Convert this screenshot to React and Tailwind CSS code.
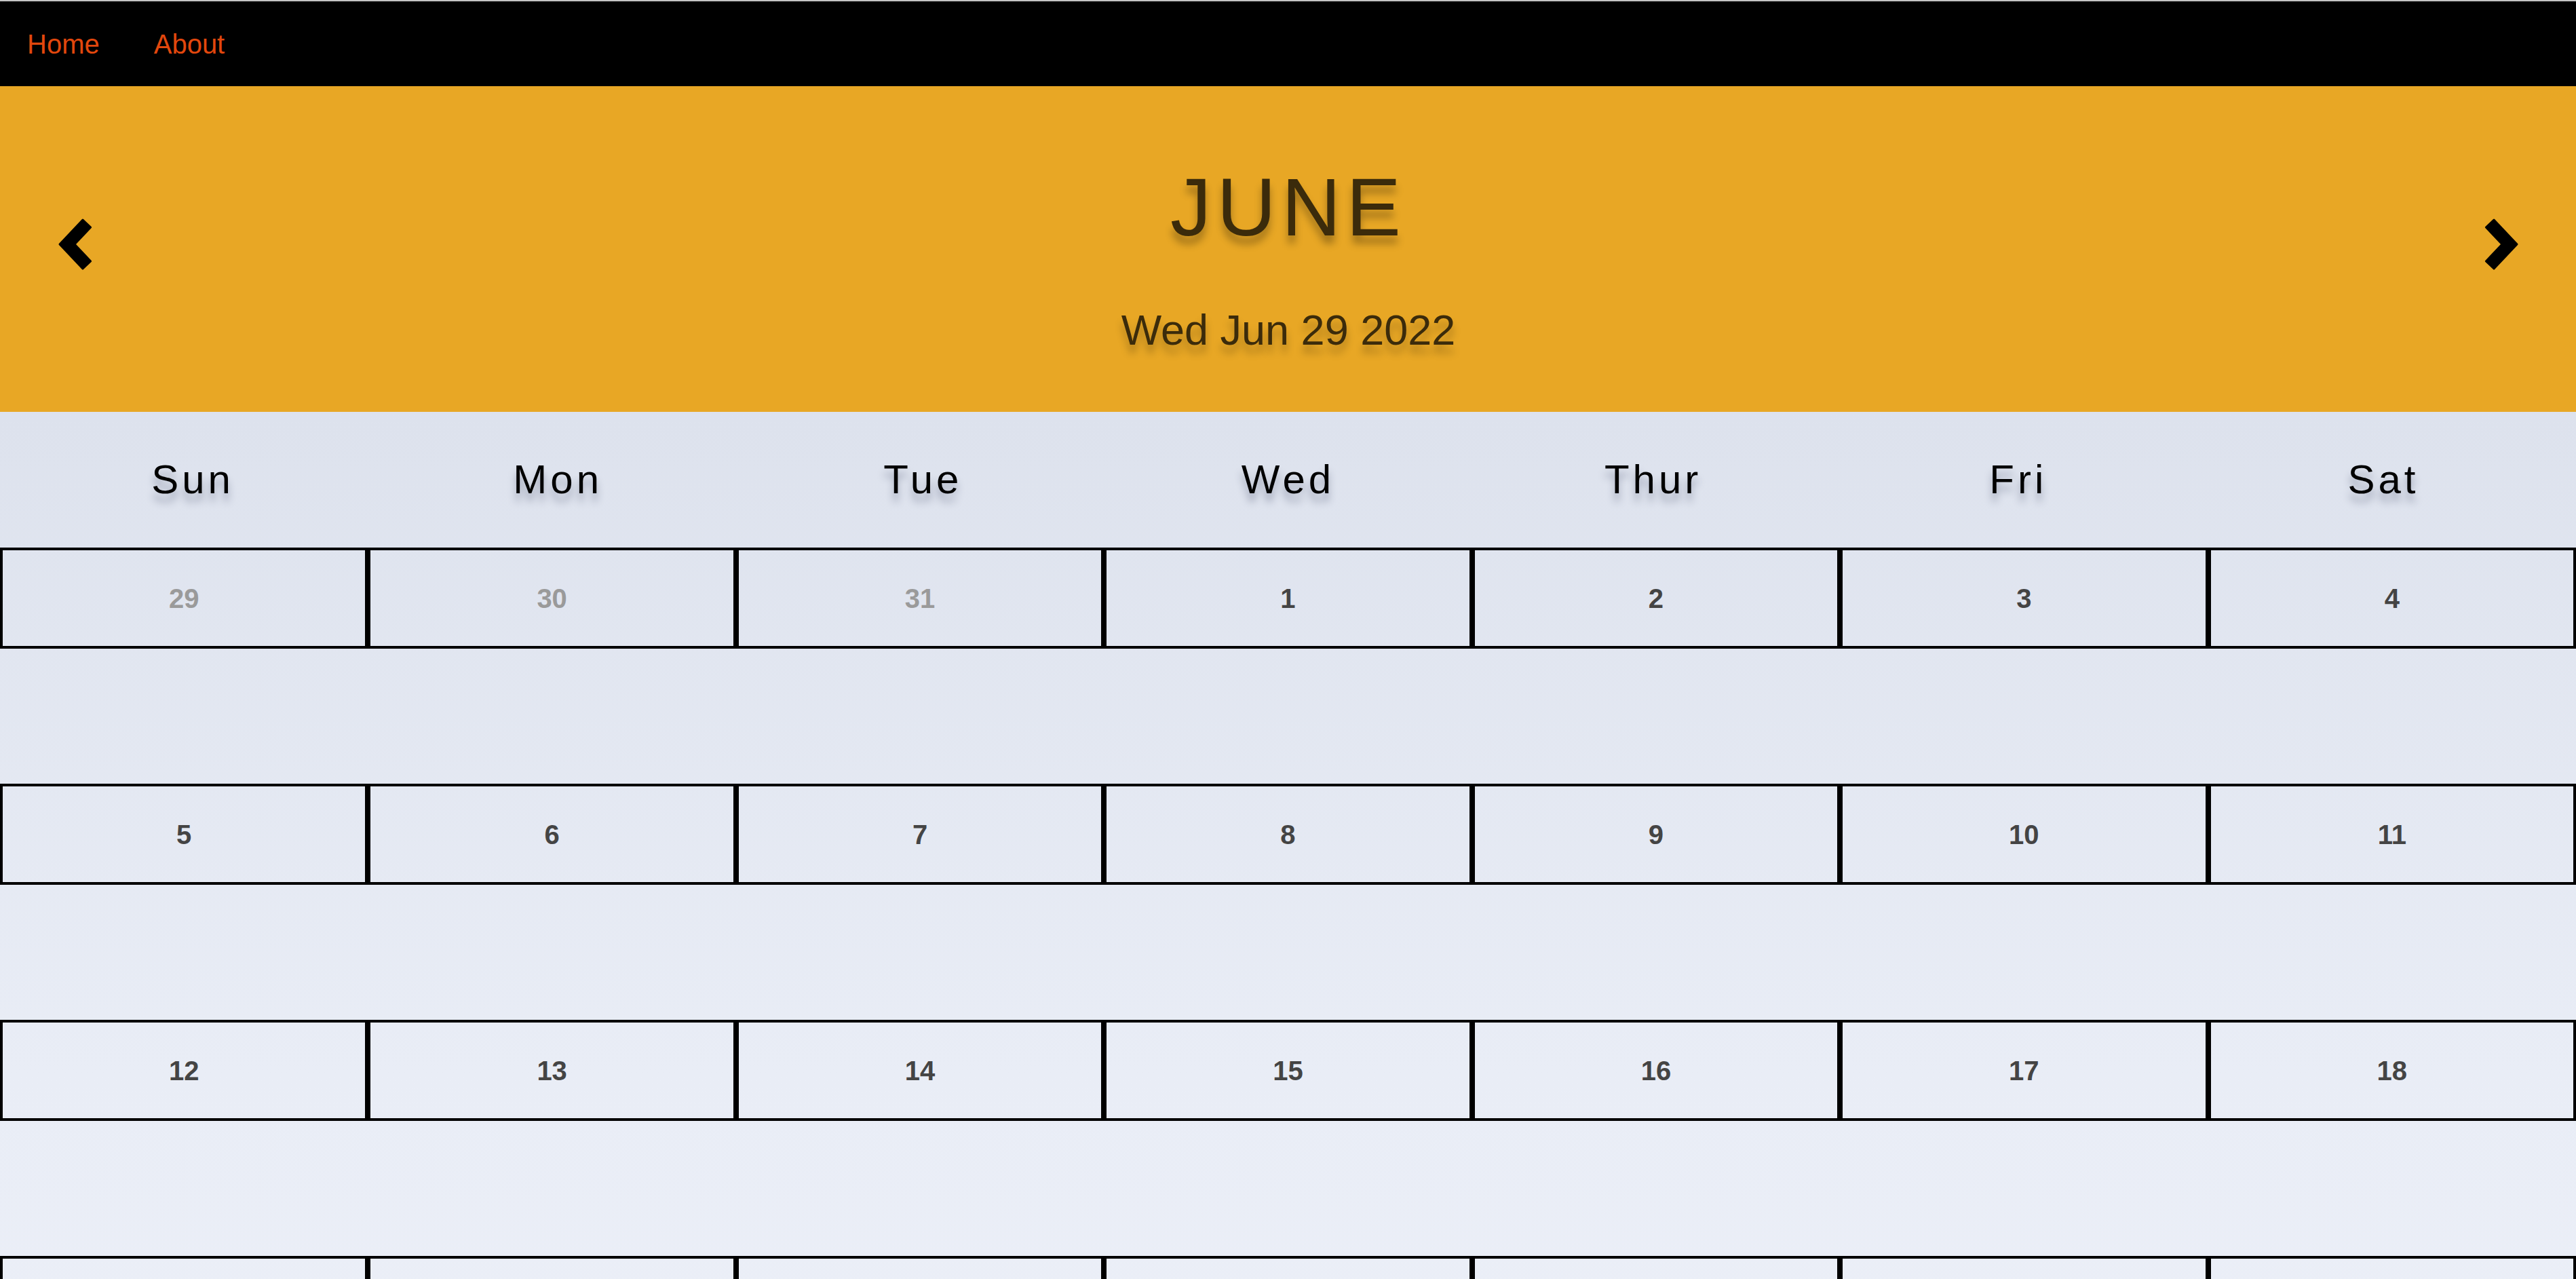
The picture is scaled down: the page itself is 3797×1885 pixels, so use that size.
const weekdays = ["Sun", "Mon", "Tue", "Wed", "Thur", "Fri", "Sat"];

// June 2022, padded with the tail of May and the head of July
const days = [
  ...[29, 30, 31].map((d) => ({ d, other: true })),
  ...Array.from({ length: 30 }, (_, i) => ({ d: i + 1, other: false })),
  ...[1, 2].map((d) => ({ d, other: true })),
];

const Chevron = ({ flip }) => (
  <svg
    viewBox="0 0 46 72"
    className={`w-[46px] h-[72px] overflow-visible ${flip ? "-scale-x-100" : ""}`}
  >
    <path
      d="M0 36 L33.98 0 L45.62 10.97 L22 36 L45.62 61.03 L33.98 72 Z"
      fill="currentColor"
      stroke="currentColor"
      strokeWidth="3"
      strokeLinejoin="round"
    />
  </svg>
);

export default function App() {
  return (
    <div className="min-h-screen font-['Liberation_Sans',Arial,sans-serif]">
      {/* Nav */}
      <nav className="h-[127px] bg-black border-t-2 border-[#c4c4c4] flex items-center">
        <a href="#" className="px-[40px] text-[40px] text-[#e2470d]">
          Home
        </a>
        <a href="#" className="px-[40px] text-[40px] text-[#e2470d]">
          About
        </a>
      </nav>

      {/* Month header */}
      <header className="h-[480px] bg-[#e8a725] flex items-center justify-between pl-[88px] pr-[87px]">
        <button className="mb-[14px] text-black">
          <Chevron />
        </button>
        <div className="flex-1 self-stretch flex flex-col items-center pt-[118px]">
          <h1 className="text-[121px] leading-none tracking-[8px] text-[#3b2b0b] [text-shadow:0_12px_12px_rgba(0,0,0,0.3)]">
            JUNE
          </h1>
          <p className="mt-[89px] text-[63px] leading-none text-[#3b2b0b] [text-shadow:0_12px_12px_rgba(0,0,0,0.25)]">
            Wed Jun 29 2022
          </p>
        </div>
        <button className="mb-[14px] text-black">
          <Chevron flip />
        </button>
      </header>

      {/* Calendar */}
      <section className="bg-gradient-to-b from-[#dde2ed] via-[#e9edf6] to-[#eef1f9] pb-[200px]">
        <div className="h-[200px] grid grid-cols-7 px-[15px] items-center">
          {weekdays.map((w) => (
            <div
              key={w}
              className="text-center text-[60px] leading-none tracking-[5px] text-black [text-shadow:0_12px_12px_rgba(40,50,80,0.35)]"
            >
              {w}
            </div>
          ))}
        </div>

        <div className="grid grid-cols-7 gap-y-[199px]">
          {days.map((day, i) => (
            <div
              key={i}
              className="h-[149px] border-4 border-black flex items-center justify-center"
            >
              <span
                className={`text-[40px] font-bold leading-none ${
                  day.other ? "text-[#9a9a9a]" : "text-[#444444]"
                }`}
              >
                {day.d}
              </span>
            </div>
          ))}
        </div>
      </section>
    </div>
  );
}
